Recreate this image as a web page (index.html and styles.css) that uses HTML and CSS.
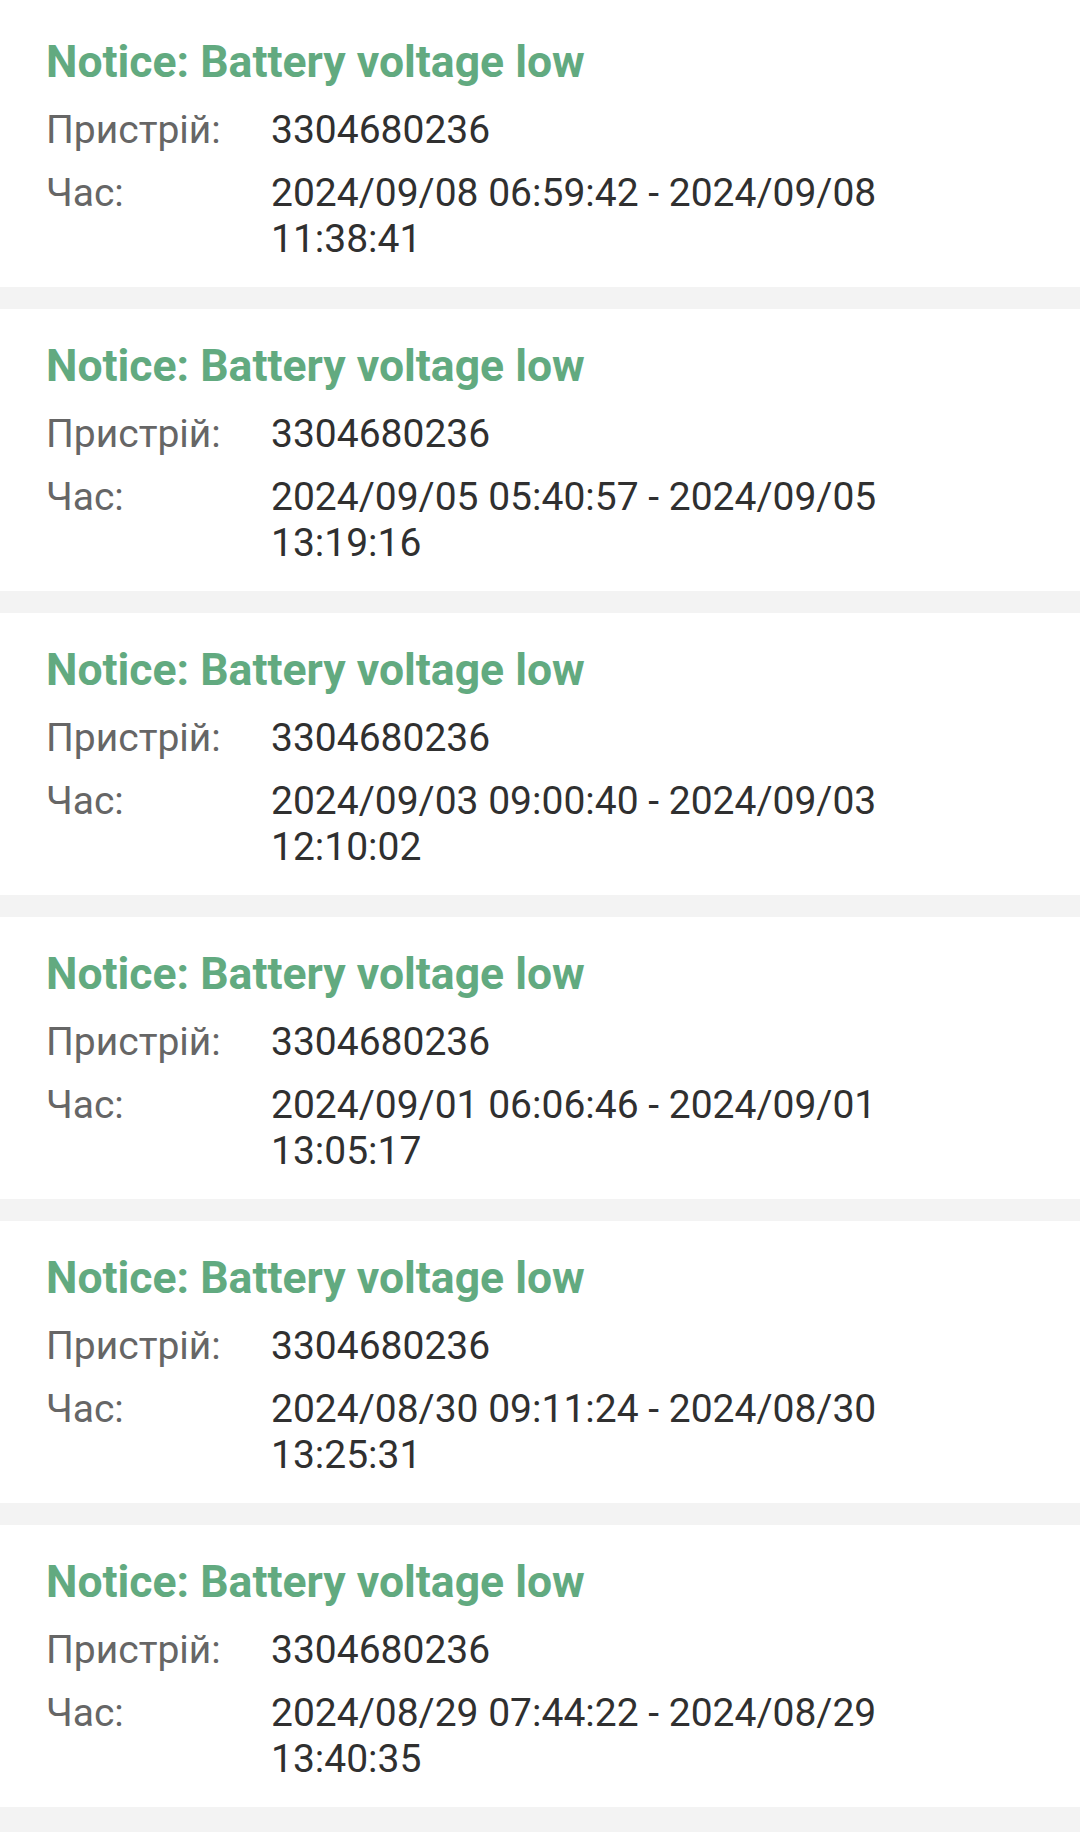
FILE: index.html
```html
<!DOCTYPE html>
<html lang="uk">
<head>
  <meta charset="UTF-8" />
  <meta name="viewport" content="width=device-width, initial-scale=1.0" />
  <title>Сповіщення</title>
  <link rel="stylesheet" href="styles.css">
</head>
<body>
  <div class="alarm-list">
    <div class="alarm">
      <div class="alarm-title">Notice: Battery voltage low</div>
      <div class="row"><div class="label">Пристрій:</div><div class="value">3304680236</div></div>
      <div class="row"><div class="label">Час:</div><div class="value">2024/09/08 06:59:42 - 2024/09/08 11:38:41</div></div>
    </div>
    <div class="alarm">
      <div class="alarm-title">Notice: Battery voltage low</div>
      <div class="row"><div class="label">Пристрій:</div><div class="value">3304680236</div></div>
      <div class="row"><div class="label">Час:</div><div class="value">2024/09/05 05:40:57 - 2024/09/05 13:19:16</div></div>
    </div>
    <div class="alarm">
      <div class="alarm-title">Notice: Battery voltage low</div>
      <div class="row"><div class="label">Пристрій:</div><div class="value">3304680236</div></div>
      <div class="row"><div class="label">Час:</div><div class="value">2024/09/03 09:00:40 - 2024/09/03 12:10:02</div></div>
    </div>
    <div class="alarm">
      <div class="alarm-title">Notice: Battery voltage low</div>
      <div class="row"><div class="label">Пристрій:</div><div class="value">3304680236</div></div>
      <div class="row"><div class="label">Час:</div><div class="value">2024/09/01 06:06:46 - 2024/09/01 13:05:17</div></div>
    </div>
    <div class="alarm">
      <div class="alarm-title">Notice: Battery voltage low</div>
      <div class="row"><div class="label">Пристрій:</div><div class="value">3304680236</div></div>
      <div class="row"><div class="label">Час:</div><div class="value">2024/08/30 09:11:24 - 2024/08/30 13:25:31</div></div>
    </div>
    <div class="alarm">
      <div class="alarm-title">Notice: Battery voltage low</div>
      <div class="row"><div class="label">Пристрій:</div><div class="value">3304680236</div></div>
      <div class="row"><div class="label">Час:</div><div class="value">2024/08/29 07:44:22 - 2024/08/29 13:40:35</div></div>
    </div>
  </div>
</body>
</html>
```

FILE: styles.css
```css
body {
  margin: 0;
  font-family: Roboto, "Noto Sans", sans-serif;
  background: #f3f3f3;
}
.alarm-list {
  display: flex;
  flex-direction: column;
  gap: 22px;
}
.alarm {
  background: #fff;
  padding: 29px 110px 25px 46px;
}
.alarm:first-child {
  padding-top: 34px;
}
.alarm-title {
  font-size: 44.5px;
  line-height: 56px;
  font-weight: bold;
  color: #62aa80;
}
.row {
  display: grid;
  grid-template-columns: 225px 1fr;
  margin-top: 17px;
  font-size: 39px;
  line-height: 46px;
}
.label {
  color: #666;
}
.value {
  color: #303030;
}
```
